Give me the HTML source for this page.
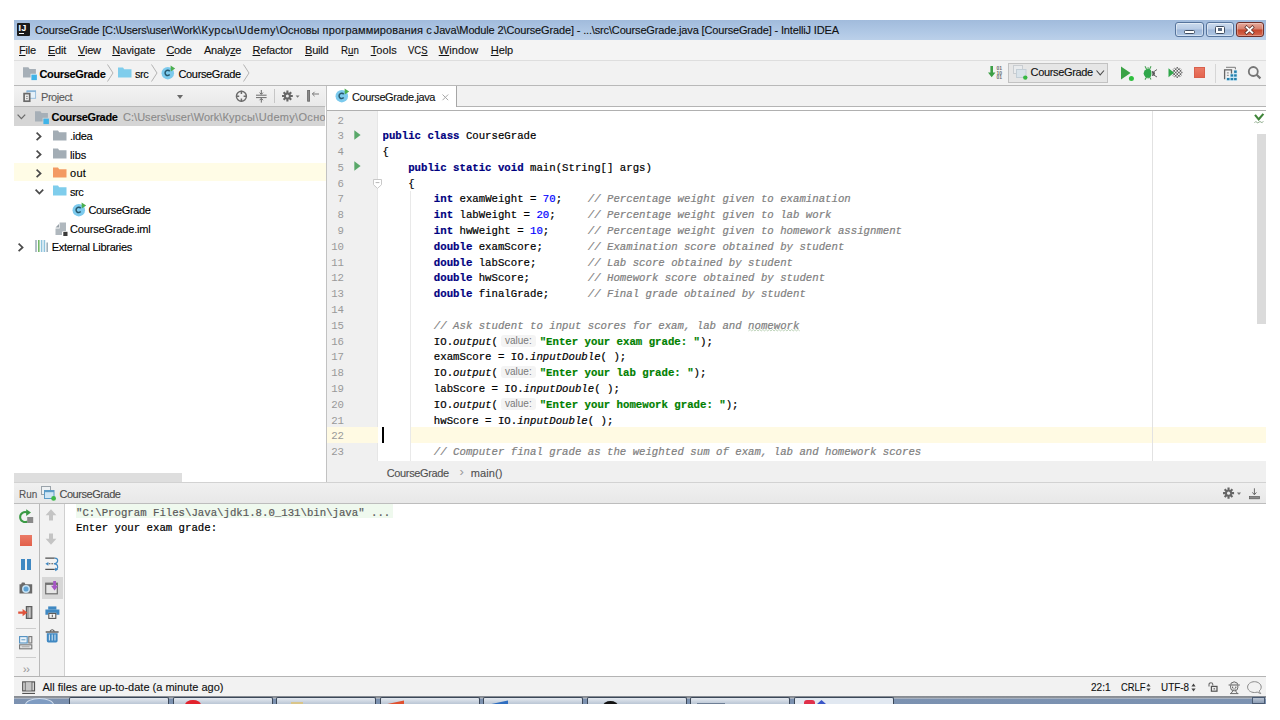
<!DOCTYPE html>
<html lang="en">
<head>
<meta charset="utf-8">
<title>CourseGrade - IntelliJ IDEA</title>
<style>
*{box-sizing:border-box;margin:0;padding:0}
html,body{width:1280px;height:720px;overflow:hidden;background:#fff}
body{position:relative;font-family:"Liberation Sans",sans-serif;font-size:11px;color:#000;-webkit-text-stroke:0.12px}
.a{position:absolute}
.t{position:absolute;white-space:nowrap;line-height:14px}
svg{position:absolute;overflow:visible}
#win{position:absolute;left:0;top:0;width:1280px;height:720px;overflow:hidden}
#bg{left:14px;top:20px;width:1252px;height:684px;background:#f2f2f2}
#title{left:14px;top:20px;width:1252px;height:20px;background:linear-gradient(#a1bbdc,#b0c8e5 60%,#bbd0e9)}
#menu{left:14px;top:40px;width:1252px;height:20px;background:#f4f4f4}
#menu span{position:absolute;top:0;line-height:20px;white-space:nowrap;font-size:11px;color:#111}
#menu u{text-decoration:underline;text-underline-offset:1px}
#nav{left:14px;top:60px;width:1252px;height:26px;background:#f2f2f2;border-top:1px solid #dedede;border-bottom:1px solid #b9b9b9}
.mono{font-family:"Liberation Mono",monospace;font-size:10.69px}
#code{-webkit-text-stroke:0.2px;left:382.5px;top:113.5px;height:347.5px;overflow:hidden;line-height:15.8px;white-space:pre;color:#000;font-family:"Liberation Mono",monospace;font-size:10.69px}
#code b{color:#000080;font-weight:bold}
#code i{color:#808080;font-style:italic}
#code .n{color:#0000ff}
#code .s{color:#008000;font-weight:bold}
#code em{font-style:italic;color:#000}
#code .h{-webkit-text-stroke:0;display:inline-block;font-family:"Liberation Sans",sans-serif;font-size:10px;color:#7a7a7a;background:#f4f4f4;border-radius:3px;height:12px;line-height:12px;width:35px;text-align:center;margin:0 3.8px 0 2.9px;vertical-align:top;margin-top:0.2px}
#lnum{left:327px;top:113.5px;height:347.5px;overflow:hidden;width:17px;line-height:15.8px;text-align:right;white-space:pre;color:#999;-webkit-text-stroke:0;font-family:"Liberation Mono",monospace;font-size:10.69px}
#con{-webkit-text-stroke:0.2px;left:76px;top:505.5px;line-height:15.7px;white-space:pre;font-family:"Liberation Mono",monospace;font-size:10.69px;color:#000}
.tb{top:696.6px;width:100px;height:8px;background:linear-gradient(#e4e9f0,#b3c0d0);border:1px solid #3c4859;border-bottom:0;border-radius:2px 2px 0 0}
</style>
</head>
<body>
<div id="win">
<div id="bg" class="a"></div>
<!-- title bar -->
<div id="title" class="a">
  <div class="a" style="left:3px;top:2.5px;width:12.7px;height:13.4px;background:#1b1b1b;border-radius:1px"></div>
  <div class="t" style="left:4.6px;top:3.6px;font-size:8.6px;line-height:9px;font-weight:bold;color:#fff;letter-spacing:0.4px">IJ</div>
  <div class="a" style="left:4.8px;top:13px;width:5px;height:1.4px;background:#fff"></div>
  <div class="t" style="left:21px;top:0;line-height:20px;font-size:11px;color:#111;letter-spacing:-0.158px;white-space:pre">CourseGrade [C:\Users\user\Work<span style="letter-spacing:0.476px">\Курсы\Udemy\</span><span style="letter-spacing:0">Основы </span><span style="letter-spacing:0.16px">программирования </span><span style="letter-spacing:-0.56px">с </span><span style="letter-spacing:-0.14px">Java\Module 2\CourseGrade]</span><span style="letter-spacing:-0.155px"> - ...\src\CourseGrade.java [CourseGrade] - IntelliJ IDEA</span></div>
  <!-- window buttons -->
  <div class="a" style="left:1161px;top:2px;width:28.6px;height:15px;border:1px solid #56749c;border-radius:3px;background:linear-gradient(#cbdbee,#b7cbe5 48%,#9db6d8 52%,#afc7e4);box-shadow:inset 0 0 0 1px rgba(255,255,255,.45)"></div>
  <div class="a" style="left:1170px;top:9.5px;width:10.5px;height:4.4px;border:1px solid #3e4c60;border-radius:1.5px;background:#fff"></div>
  <div class="a" style="left:1191.5px;top:2px;width:28.2px;height:15px;border:1px solid #56749c;border-radius:3px;background:linear-gradient(#cbdbee,#b7cbe5 48%,#9db6d8 52%,#afc7e4);box-shadow:inset 0 0 0 1px rgba(255,255,255,.45)"></div>
  <div class="a" style="left:1200.8px;top:6px;width:10px;height:7.6px;border:1px solid #3e4c60;border-radius:1.5px;background:#fff"></div>
  <div class="a" style="left:1203.6px;top:8.4px;width:4.6px;height:3px;background:#5a6a80"></div>
  <div class="a" style="left:1222px;top:2px;width:28.2px;height:15px;border:1px solid #6e2f2a;border-radius:3px;background:linear-gradient(#e6aa9c,#d67f6c 48%,#c4452c 52%,#d76a50);box-shadow:inset 0 0 0 1px rgba(255,255,255,.3)"></div>
  <svg style="left:1231.3px;top:5.8px" width="9" height="8" viewBox="0 0 9 8"><path d="M1.6 1.3 L7.4 6.7 M7.4 1.3 L1.6 6.7" stroke="#4e2622" stroke-width="3.2" stroke-linecap="square"/><path d="M1.6 1.3 L7.4 6.7 M7.4 1.3 L1.6 6.7" stroke="#fff" stroke-width="1.9" stroke-linecap="square"/></svg>
</div>
<!-- menu -->
<div id="menu" class="a">
  <span style="left:5px;letter-spacing:-0.2px"><u>F</u>ile</span>
  <span style="left:34px;letter-spacing:-0.25px"><u>E</u>dit</span>
  <span style="left:64px;letter-spacing:-0.2px"><u>V</u>iew</span>
  <span style="left:98.2px;letter-spacing:-0.05px"><u>N</u>avigate</span>
  <span style="left:152.4px;letter-spacing:-0.3px"><u>C</u>ode</span>
  <span style="left:190px;letter-spacing:-0.28px">Analy<u>z</u>e</span>
  <span style="left:238.5px;letter-spacing:-0.2px"><u>R</u>efactor</span>
  <span style="left:291px;letter-spacing:-0.2px"><u>B</u>uild</span>
  <span style="left:327.3px;transform:scaleX(.88);transform-origin:0 0">R<u>u</u>n</span>
  <span style="left:356.7px;letter-spacing:0.08px"><u>T</u>ools</span>
  <span style="left:394px;transform:scaleX(.867);transform-origin:0 0">VC<u>S</u></span>
  <span style="left:424.7px;letter-spacing:0.08px"><u>W</u>indow</span>
  <span style="left:476.8px;letter-spacing:-0.1px"><u>H</u>elp</span>
</div>
<!-- nav bar -->
<div id="nav" class="a"></div>
<svg style="left:23px;top:66px" width="15" height="14" viewBox="0 0 15 14"><path d="M0 1.3h5.4l1.2 1.7H12.9V11.4H0z" fill="#a6afb7"/><rect x="7.6" y="7.8" width="7" height="7" fill="#f2f2f2"/><rect x="8.4" y="8.6" width="5.5" height="5.5" fill="#40b4e8"/></svg>
<div class="t" style="left:39.5px;top:66.7px;font-weight:bold;color:#000;letter-spacing:-0.34px">CourseGrade</div>
<svg style="left:107px;top:64px" width="7" height="18" viewBox="0 0 7 18"><path d="M0.5 0.5 L6 9 L0.5 17.5" fill="none" stroke="#b3b3b3" stroke-width="1"/></svg>
<svg style="left:118px;top:67px" width="14" height="11" viewBox="0 0 14 11"><path d="M0 0.5h5l1.2 1.8H13.5V10.5H0z" fill="#7fcdec"/></svg>
<div class="t" style="left:135px;top:66.7px;letter-spacing:-0.4px">src</div>
<svg style="left:151px;top:64px" width="7" height="18" viewBox="0 0 7 18"><path d="M0.5 0.5 L6 9 L0.5 17.5" fill="none" stroke="#b3b3b3" stroke-width="1"/></svg>
<svg style="left:161px;top:66px" width="14" height="14" viewBox="0 0 14 14"><circle cx="6.8" cy="7.2" r="6.25" fill="#7ccaed"/><path d="M9.6 -0.4 L14.2 2.4 L9.8 5.6z" fill="#4caf50"/><path d="M8.7 5.3a2.6 2.6 0 1 0 0 3.3" fill="none" stroke="#26586e" stroke-width="1.5"/></svg>
<div class="t" style="left:178.5px;top:66.7px;letter-spacing:-0.35px">CourseGrade</div>
<svg style="left:243px;top:64px" width="7" height="18" viewBox="0 0 7 18"><path d="M0.5 0.5 L6 9 L0.5 17.5" fill="none" stroke="#b3b3b3" stroke-width="1"/></svg>
<!-- toolbar right -->
<svg style="left:988px;top:66px" width="16" height="14" viewBox="0 0 16 14"><path d="M2.4 0h2.6v6.5h2.4L3.7 11.2 0 6.5h2.4z" fill="#3da046"/><g font-family="Liberation Sans, sans-serif" font-size="5" font-weight="bold" fill="#707070" style="-webkit-text-stroke:0"><text x="8.5" y="4.4">01</text><text x="8.5" y="8.9">10</text><text x="8.5" y="13.4">01</text></g></svg>
<div class="a" style="left:1008px;top:63px;width:100px;height:20px;background:#e6e6e6;border:1px solid #c2c2c2"></div>
<svg style="left:1013px;top:65px" width="16" height="16" viewBox="0 0 16 16"><rect x="0.5" y="0.5" width="9" height="8" fill="#e9ebed" stroke="#c9cdd1"/><rect x="3.5" y="4.5" width="9.5" height="8" fill="#d9e3ea" stroke="#c3ced6"/><circle cx="12.3" cy="12.6" r="2.2" fill="#35b843"/></svg>
<div class="t" style="left:1030.6px;top:65.4px;color:#111;letter-spacing:-0.35px">CourseGrade</div>
<svg style="left:1096px;top:70px" width="9" height="6" viewBox="0 0 9 6"><path d="M0.5 0.5 L4.2 4.8 L8 0.5" fill="none" stroke="#4d4d4d" stroke-width="1.1"/></svg>
<svg style="left:1120px;top:65px" width="16" height="16" viewBox="0 0 16 16"><path d="M1 1.5 L10.6 8 L1 14.5z" fill="#3ba346"/><circle cx="11.4" cy="13.6" r="2.5" fill="#2fbf3e"/></svg>
<svg style="left:1143px;top:65px" width="15" height="16" viewBox="0 0 15 16"><path d="M2 1.2 L3.8 4.8 M8 1.2 L6.4 4.8 M5.1 2.2 V4.4 M2 14.6 L3.8 11.6 M8 14.6 L6.4 11.6 M5.1 13.6 V12" stroke="#4aa356" stroke-width="1.1" fill="none"/><ellipse cx="5.2" cy="8.3" rx="4.5" ry="4.4" fill="#2fa74a"/><path d="M7.4 4 Q9.6 8.3 7.4 12.6 L10 12.6 L10 4z" fill="#f2f2f2"/><path d="M8.7 5.9 Q12 6 12 8.4 Q12 10.8 8.7 11 Q10 8.4 8.7 5.9z" fill="#5a5a5a"/><path d="M11 6.6 L14 4.5 M11 10.2 L14 12" stroke="#666" stroke-width="1" fill="none"/></svg>
<svg style="left:1168px;top:65px" width="15" height="16" viewBox="0 0 15 16"><defs><pattern id="chk" width="3.2" height="3.2" patternUnits="userSpaceOnUse" patternTransform="translate(0.5 0.3)"><rect width="1.6" height="1.6" fill="#666"/><rect x="1.6" y="1.6" width="1.6" height="1.6" fill="#666"/></pattern></defs><circle cx="9.1" cy="7.5" r="5.4" fill="#f2f2f2"/><circle cx="9.1" cy="7.5" r="5.4" fill="url(#chk)"/><path d="M0.5 3.3 L6 7.8 L0.5 12.3z" fill="#2fa74a"/></svg>
<div class="a" style="left:1194.2px;top:67.3px;width:11px;height:11px;background:linear-gradient(#ea7a66,#e4654f);border:0.5px solid #d9604c"></div>
<div class="a" style="left:1215.4px;top:64px;width:1px;height:19px;background:#d6d6d6"></div>
<svg style="left:1223px;top:66px" width="15" height="15" viewBox="0 0 15 15"><path d="M3 1.3h9.4v2" fill="none" stroke="#7c7c7c" stroke-width="1"/><path d="M1.6 13.2V3.9h6.9v3.8" fill="none" stroke="#666" stroke-width="1.3"/><path d="M3.9 6.9h1.9M3.9 9.3h1.9" stroke="#777" stroke-width="0.9"/><path d="M10.6 4h3.6v10.7H3.4V11.5h3.7V7.8h3.5z" fill="#c9e7f6"/><g fill="#237fab"><rect x="11.1" y="4.5" width="2.6" height="2.4"/><rect x="7.6" y="8.3" width="2.6" height="2.3"/><rect x="11.1" y="8.3" width="2.6" height="2.3"/><rect x="3.9" y="12" width="2.6" height="2.2"/><rect x="7.6" y="12" width="2.6" height="2.2"/><rect x="11.1" y="12" width="2.6" height="2.2"/></g></svg>
<svg style="left:1247px;top:66px" width="15" height="15" viewBox="0 0 15 15"><circle cx="6.3" cy="5.5" r="4.5" fill="none" stroke="#767676" stroke-width="1.8"/><path d="M9.6 8.8 L13.4 12.4" stroke="#767676" stroke-width="2.2"/></svg>

<!-- project tool window header -->
<div class="a" style="left:14px;top:86px;width:311px;height:21px;background:linear-gradient(#f3f3f3,#e9e9e9);border-bottom:1px solid #b9b9b9"></div>
<svg style="left:23px;top:90px" width="14" height="13" viewBox="0 0 14 13"><rect x="4" y="0.9" width="8.6" height="7.4" fill="#e6f1f9" stroke="#93bbdb" stroke-width="0.9"/><path d="M3.6 1.3h9.4" stroke="#8ab5d8" stroke-width="1.5"/><rect x="1.1" y="3.6" width="5.6" height="7.6" fill="#ececec" stroke="#6a6a6a" stroke-width="1.7"/><path d="M3 6.4h1.8M3 8.6h1.8" stroke="#7a7a7a" stroke-width="0.8"/></svg>
<div class="t" style="left:41px;top:90px;color:#5a5a5a;letter-spacing:-0.44px">Project</div>
<svg style="left:177px;top:95px" width="6" height="4" viewBox="0 0 6 4"><path d="M0 0h6L3 4z" fill="#6a6a6a"/></svg>
<svg style="left:235px;top:90px" width="13" height="13" viewBox="0 0 13 13"><circle cx="6.4" cy="6.2" r="5" fill="none" stroke="#6b6b6b" stroke-width="1.4"/><path d="M6.4 0.8v3.2M6.4 8.6v3.2M1 6.2h3.2M8.6 6.2h3.2" stroke="#6b6b6b" stroke-width="1.5"/></svg>
<svg style="left:256px;top:90px" width="11" height="13" viewBox="0 0 11 13"><path d="M0 5.2h10.6M0 7.6h10.6" stroke="#6b6b6b" stroke-width="1"/><path d="M5.3 0v4M3.6 2.6L5.3 4.4 7 2.6M5.3 12.6v-4M3.6 10.2L5.3 8.4 7 10.2" stroke="#6b6b6b" stroke-width="1" fill="none"/></svg>
<div class="a" style="left:274px;top:89px;width:1px;height:14px;background:#c6c6c6"></div>
<svg style="left:282.4px;top:90px" width="20" height="13" viewBox="0 0 20 13"><g stroke="#666" stroke-width="2.1"><path d="M5.4 0.4v11.2M0 6h10.8M1.6 2.2l7.6 7.6M9.2 2.2L1.6 9.8"/></g><circle cx="5.4" cy="6" r="3.4" fill="#666"/><circle cx="5.4" cy="6" r="1.5" fill="#ececec"/><path d="M13.6 5.4h4L15.6 7.8z" fill="#777"/></svg>
<svg style="left:307px;top:90px" width="13" height="12" viewBox="0 0 13 12"><rect x="0.6" y="0.4" width="2" height="10.8" fill="#8a8a8a" stroke="#666" stroke-width="0.8"/><path d="M5.4 4h6.6M7.6 1.8L5.4 4l2.2 2.2" fill="none" stroke="#777" stroke-width="1"/></svg>

<!-- project tree -->
<div class="a" style="left:14px;top:107px;width:312px;height:375px;background:#fff"></div>
<div class="a" style="left:14px;top:107px;width:311px;height:19px;background:#d5d5d5"></div>
<div class="a" style="left:14px;top:163.2px;width:311.7px;height:18.2px;background:#fffce6"></div>
<div class="a" style="left:14px;top:472.5px;width:167.7px;height:9.4px;background:#dedede"></div>
<!-- tree rows -->
<svg style="left:17px;top:114px" width="9" height="6" viewBox="0 0 9 6"><path d="M0.6 0.6 L4.4 4.6 L8.2 0.6" fill="none" stroke="#6a6a6a" stroke-width="1.3"/></svg>
<svg style="left:35px;top:110px" width="15" height="14" viewBox="0 0 15 14"><path d="M0 1.3h5.4l1.2 1.7H12.9V11.4H0z" fill="#a6afb7"/><rect x="7.6" y="7.8" width="7" height="7" fill="#d5d5d5"/><rect x="8.4" y="8.6" width="5.5" height="5.5" fill="#40b4e8"/></svg>
<div class="t" style="left:51.6px;top:110.3px;font-weight:bold;color:#000;letter-spacing:-0.34px">CourseGrade</div>
<div class="t" style="left:123px;top:110.3px;color:#8a8a8a;width:202px;overflow:hidden;letter-spacing:0.03px">C:\Users\user\Work\<span style="letter-spacing:0.32px">Курсы\Udemy\Основы программирования с Java\Module 2\CourseGrade</span></div>

<svg style="left:36px;top:131.5px" width="6" height="9" viewBox="0 0 6 9"><path d="M0.6 0.6 L4.6 4.4 L0.6 8.2" fill="none" stroke="#4a4a4a" stroke-width="1.7"/></svg>
<svg style="left:53px;top:129.6px" width="14" height="11" viewBox="0 0 14 11"><path d="M0 0.5h5l1.2 1.8H13.5V10.5H0z" fill="#a3adb5"/></svg>
<div class="t" style="left:70px;top:129px;letter-spacing:-0.28px">.idea</div>

<svg style="left:36px;top:150px" width="6" height="9" viewBox="0 0 6 9"><path d="M0.6 0.6 L4.6 4.4 L0.6 8.2" fill="none" stroke="#4a4a4a" stroke-width="1.7"/></svg>
<svg style="left:53px;top:148.2px" width="14" height="11" viewBox="0 0 14 11"><path d="M0 0.5h5l1.2 1.8H13.5V10.5H0z" fill="#a3adb5"/></svg>
<div class="t" style="left:70px;top:147.6px;letter-spacing:-0.12px">libs</div>

<svg style="left:36px;top:168.6px" width="6" height="9" viewBox="0 0 6 9"><path d="M0.6 0.6 L4.6 4.4 L0.6 8.2" fill="none" stroke="#4a4a4a" stroke-width="1.7"/></svg>
<svg style="left:53px;top:166.8px" width="14" height="11" viewBox="0 0 14 11"><path d="M0 0.5h5l1.2 1.8H13.5V10.5H0z" fill="#f39a63"/></svg>
<div class="t" style="left:70px;top:166.2px;letter-spacing:0.3px">out</div>

<svg style="left:35px;top:189px" width="9" height="6" viewBox="0 0 9 6"><path d="M0.6 0.6 L4.4 4.6 L8.2 0.6" fill="none" stroke="#4a4a4a" stroke-width="1.7"/></svg>
<svg style="left:53px;top:185.4px" width="14" height="11" viewBox="0 0 14 11"><path d="M0 0.5h5l1.2 1.8H13.5V10.5H0z" fill="#7fcdec"/></svg>
<div class="t" style="left:70px;top:184.8px;letter-spacing:-0.4px">src</div>

<svg style="left:71.5px;top:203px" width="14" height="14" viewBox="0 0 14 14"><circle cx="6.8" cy="7.2" r="6.25" fill="#7ccaed"/><path d="M9.6 -0.4 L14.2 2.4 L9.8 5.6z" fill="#4caf50"/><path d="M8.7 5.3a2.6 2.6 0 1 0 0 3.3" fill="none" stroke="#26586e" stroke-width="1.5"/></svg>
<div class="t" style="left:88.4px;top:203.4px;letter-spacing:-0.35px">CourseGrade</div>

<svg style="left:55px;top:222px" width="13" height="14" viewBox="0 0 13 14"><path d="M0.5 5.5L4 2v3.5z" fill="#98a1a8"/><path d="M4.6 0.5H11V10H7V13H0.5V6.4h4.1z" fill="#b0b8be"/><rect x="7.6" y="9" width="5" height="5" fill="#fff"/><rect x="8.3" y="9.8" width="4.2" height="4.2" fill="#3a3a3a"/></svg>
<div class="t" style="left:70px;top:221.5px;letter-spacing:-0.17px">CourseGrade.iml</div>

<svg style="left:17.5px;top:243px" width="6" height="9" viewBox="0 0 6 9"><path d="M0.6 0.6 L4.6 4.4 L0.6 8.2" fill="none" stroke="#4a4a4a" stroke-width="1.7"/></svg>
<svg style="left:35px;top:239.8px" width="14" height="12" viewBox="0 0 14 12"><path d="M1 0v12" stroke="#9fb0bb" stroke-width="1.6"/><path d="M3.8 0v12" stroke="#74b867" stroke-width="1.6"/><path d="M6.6 0v12" stroke="#8fc3dd" stroke-width="1.6"/><path d="M9.4 0v12" stroke="#8fc3dd" stroke-width="1.6"/><path d="M12.2 2.6v9.4" stroke="#9fb0bb" stroke-width="1.6"/></svg>
<div class="t" style="left:51.8px;top:240.1px;letter-spacing:-0.3px">External Libraries</div>

<!-- splitter between project and editor -->
<div class="a" style="left:325.7px;top:86px;width:1.3px;height:396px;background:#c2c2c2"></div>
<!-- editor tab strip -->
<div class="a" style="left:327px;top:86px;width:939px;height:25px;background:#f2f2f2"></div>
<div class="a" style="left:327px;top:106px;width:939px;height:1.4px;background:#b4b4b4"></div>
<div class="a" style="left:327px;top:107.4px;width:939px;height:2.8px;background:#fff"></div>
<div class="a" style="left:327px;top:86px;width:130px;height:24px;background:#fff"></div><div class="a" style="left:456px;top:86px;width:1px;height:21px;background:#a6a6a6"></div>
<div class="a" style="left:327px;top:110px;width:939px;height:1px;background:#b0b0b0"></div>
<svg style="left:335px;top:88.7px" width="14" height="14" viewBox="0 0 14 14"><circle cx="6.8" cy="7.2" r="6.25" fill="#7ccaed"/><path d="M9.6 -0.4 L14.2 2.4 L9.8 5.6z" fill="#4caf50"/><path d="M8.7 5.3a2.6 2.6 0 1 0 0 3.3" fill="none" stroke="#26586e" stroke-width="1.5"/></svg>
<div class="t" style="left:352px;top:90px;color:#111;letter-spacing:-0.39px">CourseGrade.java</div>
<svg style="left:442px;top:93.5px" width="7" height="7" viewBox="0 0 7 7"><path d="M0.5 0.5 L6.2 6.2 M6.2 0.5 L0.5 6.2" stroke="#a8a8a8" stroke-width="1"/></svg>

<!-- editor body -->
<div class="a" style="left:327px;top:111px;width:939px;height:350px;background:#fff"></div>
<div class="a" style="left:327px;top:111px;width:50.5px;height:350px;background:#f0f0f0;border-right:1px solid #e6e6e6"></div>
<div class="a" style="left:327px;top:427.3px;width:939px;height:15.6px;background:#fffae3"></div><div class="a" style="left:377.5px;top:427.3px;width:32.5px;height:15.6px;background:#fff"></div>
<div class="a" style="left:1152px;top:111px;width:1px;height:350px;background:#e2e2e2"></div>
<div class="a" style="left:410px;top:191px;width:1px;height:270px;background:#e9e9e9"></div>
<div class="a" style="left:1256.9px;top:134.2px;width:9.1px;height:189.5px;background:#dbdbdb"></div>
<svg style="left:1254px;top:113px" width="11" height="12" viewBox="0 0 11 12"><path d="M1 1.8 L4.7 6.3 L9.4 0.9" fill="none" stroke="#3f8539" stroke-width="2.1"/><path d="M0.5 9.8 q1.1 -2 2.2 -0.6 t2.2 0 t2.2 0 t2.2 -1" fill="none" stroke="#86a582" stroke-width="0.9"/></svg>
<!-- gutter icons -->
<svg style="left:354px;top:129.8px" width="7" height="10" viewBox="0 0 7 10"><path d="M0.3 0.3 L6.6 5 L0.3 9.7z" fill="#59a869"/></svg>
<svg style="left:354px;top:161.4px" width="7" height="10" viewBox="0 0 7 10"><path d="M0.3 0.3 L6.6 5 L0.3 9.7z" fill="#59a869"/></svg>
<svg style="left:373px;top:178.5px" width="9" height="10" viewBox="0 0 9 10"><path d="M0.5 0.5h8v5.2L4.5 9.4 0.5 5.7z" fill="#fff" stroke="#c9c9c9" stroke-width="1"/><path d="M2.6 3.6h3.8" stroke="#b5b5b5" stroke-width="1"/></svg>
<div id="lnum" class="a">2
3
4
5
6
7
8
9
10
11
12
13
14
15
16
17
18
19
20
21
22
23</div>
<div id="code" class="a">
<b>public class</b> CourseGrade
{
    <b>public static void</b> main(String[] args)
    {
        <b>int</b> examWeight = <span class="n">70</span>;    <i>// Percentage weight given to examination</i>
        <b>int</b> labWeight = <span class="n">20</span>;     <i>// Percentage weight given to lab work</i>
        <b>int</b> hwWeight = <span class="n">10</span>;      <i>// Percentage weight given to homework assignment</i>
        <b>double</b> examScore;       <i>// Examination score obtained by student</i>
        <b>double</b> labScore;        <i>// Lab score obtained by student</i>
        <b>double</b> hwScore;         <i>// Homework score obtained by student</i>
        <b>double</b> finalGrade;      <i>// Final grade obtained by student</i>

        <i>// Ask student to input scores for exam, lab and nomework</i>
        IO.<em>output</em>(<span class="h">value:</span><span class="s">"Enter your exam grade: "</span>);
        examScore = IO.<em>inputDouble</em>( );
        IO.<em>output</em>(<span class="h">value:</span><span class="s">"Enter your lab grade: "</span>);
        labScore = IO.<em>inputDouble</em>( );
        IO.<em>output</em>(<span class="h">value:</span><span class="s">"Enter your homework grade: "</span>);
        hwScore = IO.<em>inputDouble</em>( );

        <i>// Computer final grade as the weighted sum of exam, lab and homework scores</i></div>
<div class="a" style="left:382.3px;top:427.3px;width:2.1px;height:15.6px;background:#000"></div>
<svg style="left:748px;top:328px" width="52" height="5" viewBox="0 0 52 5"><path d="M0.5 2.9000000000000004 L2.1 1.5 L3.7 2.9 L5.3 1.5 L6.9 2.9 L8.5 1.5 L10.1 2.9 L11.7 1.5 L13.3 2.9 L14.9 1.5 L16.5 2.9 L18.1 1.5 L19.7 2.9 L21.3 1.5 L22.9 2.9 L24.5 1.5 L26.1 2.9 L27.7 1.5 L29.3 2.9 L30.9 1.5 L32.5 2.9 L34.1 1.5 L35.7 2.9 L37.3 1.5 L38.9 2.9 L40.5 1.5 L42.1 2.9 L43.7 1.5 L45.3 2.9 L46.9 1.5 L48.5 2.9 L50.1 1.5 L51.7 2.9" fill="none" stroke="#a9c7a4" stroke-width="0.8"/></svg>
<!-- editor breadcrumbs -->
<div class="a" style="left:327px;top:461px;width:939px;height:21px;background:#f0f0f0"></div>
<div class="t" style="left:386.7px;top:465.6px;color:#505050;letter-spacing:-0.35px">CourseGrade</div>
<div class="t" style="left:459.4px;top:464.6px;color:#9a9a9a;font-size:13px;-webkit-text-stroke:0">›</div>
<div class="t" style="left:470.7px;top:465.6px;color:#505050;letter-spacing:0.1px">main()</div>
<!-- run tool window -->
<div class="a" style="left:14px;top:482px;width:1252px;height:22px;background:linear-gradient(#f0f0f0,#e8e8e8);border-top:1px solid #d2d2d2;border-bottom:1px solid #bdbdbd"></div>
<div class="t" style="left:18.75px;top:487px;color:#555;transform:scaleX(.9);transform-origin:0 0">Run</div>
<svg style="left:41px;top:486px" width="16" height="15" viewBox="0 0 16 15"><rect x="0.5" y="0.5" width="9" height="8" fill="#eef1f3" stroke="#9aa3aa"/><rect x="3.5" y="4.5" width="9.5" height="8" fill="#cfe6f5" stroke="#5d9cc7"/><path d="M3.5 5.5h9.5" stroke="#5d9cc7" stroke-width="1.4"/><circle cx="12.6" cy="12.4" r="2.4" fill="#3fb84a"/></svg>
<div class="t" style="left:59.4px;top:487px;color:#4a4a4a;letter-spacing:-0.45px">CourseGrade</div>
<svg style="left:1222.8px;top:487.2px" width="20.5" height="13.3" viewBox="0 0 20 13"><g stroke="#666" stroke-width="2.1"><path d="M5.4 0.4v11.2M0 6h10.8M1.6 2.2l7.6 7.6M9.2 2.2L1.6 9.8"/></g><circle cx="5.4" cy="6" r="3.4" fill="#666"/><circle cx="5.4" cy="6" r="1.5" fill="#ececec"/><path d="M13.6 5.4h4L15.6 7.8z" fill="#777"/></svg>
<svg style="left:1249px;top:487.6px" width="12" height="12" viewBox="0 0 12 12"><path d="M5.4 0.3v6.4M3.4 4.4l2 2.4 2-2.4" fill="none" stroke="#6a6a6a" stroke-width="1"/><rect x="0.6" y="8.6" width="9.8" height="2.2" fill="#8a8a8a" stroke="#5a5a5a" stroke-width="0.7"/></svg>

<div class="a" style="left:14px;top:504px;width:1252px;height:172px;background:#fff"></div>
<div class="a" style="left:14px;top:504px;width:25.8px;height:172px;background:#f2f2f2;border-right:1px solid #b9b9b9"></div>
<div class="a" style="left:39.5px;top:504px;width:25.5px;height:172px;background:#f2f2f2;border-right:1px solid #d0d0d0"></div>
<div class="a" style="left:41.5px;top:577px;width:21px;height:21.5px;background:#d7d7d7"></div>
<div class="a" style="left:16px;top:627.9px;width:20px;height:1px;background:#cdcdcd"></div>
<div class="a" style="left:16px;top:657.2px;width:20px;height:1px;background:#cdcdcd"></div>
<!-- col1 icons -->
<svg style="left:19px;top:509px" width="15" height="15" viewBox="0 0 15 15"><path d="M8.6 12.4 A5 5 0 1 1 8.4 3.6" fill="none" stroke="#3a9a44" stroke-width="2"/><path d="M7.2 0.2 L12 3.6 L7.2 7z" fill="#3a9a44"/><rect x="8.2" y="8" width="6" height="6" fill="#8a8a8a"/></svg>
<div class="a" style="left:20px;top:535px;width:11.5px;height:11px;background:linear-gradient(#ea7a66,#e2604a)"></div>
<div class="a" style="left:21px;top:559px;width:3.8px;height:11px;background:#3f88c2"></div>
<div class="a" style="left:26.8px;top:559px;width:3.8px;height:11px;background:#3f88c2"></div>
<svg style="left:19px;top:582px" width="14" height="12" viewBox="0 0 14 12"><path d="M0.5 2.2h1.6l0.8-1.6h2.6l0.8 1.6h6.9v9.4H0.5z" fill="#6a6a6a"/><circle cx="7" cy="6.9" r="4" fill="#c6e2f4"/><circle cx="7" cy="6.9" r="2.5" fill="#5fa3d6"/></svg>
<svg style="left:18px;top:606px" width="15" height="13" viewBox="0 0 15 13"><rect x="8.4" y="0.6" width="5.4" height="11.8" fill="#a2a2a2" stroke="#5e5e5e" stroke-width="1.2"/><path d="M11.6 1.4v10.2" stroke="#c8c8c8" stroke-width="1.4"/><path d="M0.2 5.4h4.4V2.9L9.4 6.6 4.6 10.3V7.8H0.2z" fill="#e0533b"/></svg>
<svg style="left:19px;top:636px" width="14" height="14" viewBox="0 0 14 14"><rect x="0.6" y="0.6" width="7.6" height="6.4" fill="#eaf3fa" stroke="#4f8fc0" stroke-width="1.1"/><path d="M2.4 3.8h4" stroke="#4f8fc0" stroke-width="0.9"/><rect x="9.8" y="0.6" width="3" height="6.4" fill="#e9e9e9" stroke="#777" stroke-width="1.1"/><rect x="0.6" y="8.8" width="12.2" height="4" fill="#e9e9e9" stroke="#777" stroke-width="1.1"/><path d="M2.6 10.8h8" stroke="#999" stroke-width="0.9"/></svg>
<div class="t" style="left:23px;top:661.5px;color:#9a9a9a;font-size:11px;letter-spacing:-0.4px">››</div>
<!-- col2 icons -->
<svg style="left:45.3px;top:508.6px" width="12" height="12" viewBox="0 0 12 12"><path d="M6 0.3 L11.4 6.2H8v5.4H4V6.2H0.6z" fill="#c4c4c4"/></svg>
<svg style="left:45.3px;top:532.6px" width="12" height="12" viewBox="0 0 12 12"><path d="M6 11.7 L11.4 5.8H8V0.4H4v5.4H0.6z" fill="#c4c4c4"/></svg>
<svg style="left:45px;top:556.5px" width="14" height="14" viewBox="0 0 14 14"><path d="M0.3 1.1h9.4M0.3 12.4h9.4" stroke="#4f4f4f" stroke-width="1.2"/><path d="M3.6 6.8h4.6" stroke="#4f4f4f" stroke-width="1.1" stroke-dasharray="1.8 1"/><path d="M9.7 1.1 Q13.2 1.3 12.6 4.2 Q12.2 6.6 9 6.8" fill="none" stroke="#3f88c2" stroke-width="1.2"/><path d="M9.7 12.4 Q13.2 12.2 12.6 9.4 Q12.2 7 9.6 6.9" fill="none" stroke="#3f88c2" stroke-width="1.2"/><path d="M3.4 4.9 L0.4 6.8 L3.4 8.7z" fill="#3f88c2"/><path d="M10.2 10.4 L13.2 12.4 L10.2 14.2z" fill="#3f88c2"/></svg>
<svg style="left:45px;top:581px" width="14" height="14" viewBox="0 0 14 14"><rect x="0.7" y="2.2" width="11.6" height="10.6" fill="#e6e6e6" stroke="#6e6e6e" stroke-width="1.2"/><path d="M0.7 3h11.6" stroke="#6e6e6e" stroke-width="1.8"/><path d="M8.2 0v4.8H6L9.6 9.4 13.2 4.8H11V0z" fill="#a557c4"/></svg>
<svg style="left:45px;top:605.5px" width="15" height="13" viewBox="0 0 15 13"><rect x="3.2" y="0.4" width="8.2" height="3.2" fill="#3f88c2"/><path d="M0.4 3.4h14v5.4H11.4V6.8H3.2v2H0.4z" fill="#3f88c2"/><rect x="3.8" y="7.4" width="7" height="5" fill="#f4f4f4" stroke="#555" stroke-width="1.1"/><path d="M7.3 8.6v2.6" stroke="#555" stroke-width="1"/></svg>
<svg style="left:45.5px;top:628.5px" width="13" height="14" viewBox="0 0 13 14"><path d="M4 2.4 Q6.2 -0.8 8.4 2.4" fill="none" stroke="#555" stroke-width="1.1"/><path d="M-0.3 3h12.9" stroke="#4a4a4a" stroke-width="1.3"/><path d="M0.8 4.2h10.8v7.6q0 1.6-1.6 1.6H2.4q-1.6 0-1.6-1.6z" fill="#3f88c2"/><path d="M3.4 5.6v6M6.2 5.6v6M9 5.6v6" stroke="#cfe3f3" stroke-width="1.1"/></svg>
<!-- console -->
<div class="a" style="left:75.5px;top:504.4px;width:317px;height:14px;background:#eff9ee"></div>
<div id="con" class="a"><span style="color:#5a5a5a">"C:\Program Files\Java\jdk1.8.0_131\bin\java" ...</span>
Enter your exam grade: </div>

<!-- status bar -->
<div class="a" style="left:14px;top:676px;width:1252px;height:20.5px;background:#f2f2f2;border-top:1px solid #b4b4b4"></div>
<svg style="left:22px;top:680.5px" width="14" height="14" viewBox="0 0 14 14"><rect x="0.7" y="0.9" width="11.8" height="9" fill="#e4e4e4" stroke="#555" stroke-width="1.2"/><rect x="3.4" y="1.4" width="6.4" height="8" fill="#c6c6c6"/><path d="M3.2 0.9v9M10 0.9v9" stroke="#555" stroke-width="0.9"/><path d="M0.2 12.4h12.8" stroke="#4a4a4a" stroke-width="1.1"/></svg>
<div class="t" style="left:42.5px;top:679.5px;color:#111">All files are up-to-date (a minute ago)</div>
<div class="t" style="left:1091px;top:679.5px;color:#111;transform:scaleX(.91);transform-origin:0 0">22:1</div>
<div class="t" style="left:1120.5px;top:679.5px;color:#111;transform:scaleX(.853);transform-origin:0 0">CRLF</div>
<svg style="left:1146px;top:682.5px" width="5" height="9" viewBox="0 0 5 9"><path d="M0.4 3.4L2.5 0.6 4.6 3.4zM0.4 5.6L2.5 8.4 4.6 5.6z" fill="#444"/></svg>
<div class="t" style="left:1161px;top:679.5px;color:#111;transform:scaleX(.897);transform-origin:0 0">UTF-8</div>
<svg style="left:1190.5px;top:682.5px" width="5" height="9" viewBox="0 0 5 9"><path d="M0.4 3.4L2.5 0.6 4.6 3.4zM0.4 5.6L2.5 8.4 4.6 5.6z" fill="#444"/></svg>
<svg style="left:1208px;top:682px" width="10" height="10" viewBox="0 0 10 10"><path d="M1 4.4V2.6a1.9 1.9 0 0 1 3.8 0v1" fill="none" stroke="#6a6a6a" stroke-width="1.1"/><rect x="3.4" y="4.4" width="5.6" height="4.8" fill="#e9e9e9" stroke="#555" stroke-width="1.2"/><path d="M6.2 6v1.6" stroke="#555" stroke-width="1"/></svg>
<svg style="left:1228px;top:680.5px" width="13" height="13" viewBox="0 0 13 13"><path d="M3 3.6V2.2Q6.2 -0.6 9.4 2.2v1.4" fill="#e6e6e6" stroke="#6a6a6a" stroke-width="1"/><path d="M0.6 4h11.2" stroke="#6a6a6a" stroke-width="1.1"/><path d="M2.6 4.4v2.4q0 3 3.6 3t3.6-3V4.4" fill="none" stroke="#6a6a6a" stroke-width="1"/><circle cx="4.6" cy="6.2" r="0.7" fill="#555"/><circle cx="7.8" cy="6.2" r="0.7" fill="#555"/><path d="M4.4 8h3.6" stroke="#6a6a6a" stroke-width="0.8"/><path d="M3 12.4 L4.8 10 M9.4 12.4 L7.6 10M2 12.6h8.4" stroke="#6a6a6a" stroke-width="1"/></svg>
<svg style="left:1247px;top:681px" width="16" height="14" viewBox="0 0 16 14"><path d="M7.4 0.7c3.8 0 6.8 2.4 6.8 5.4 0 1.6-0.8 3-2.2 4l1.8 2.6-3.6-1.6c-0.9 0.3-1.8 0.4-2.8 0.4-3.8 0-6.8-2.4-6.8-5.4s3-5.4 6.8-5.4z" fill="none" stroke="#8a8a8a" stroke-width="1"/></svg>

<!-- windows taskbar peek -->
<div class="a" style="left:14px;top:696px;width:1252px;height:8px;background:linear-gradient(#878b92 0,#8d9299 20%,#adb7c6 24%,#a4afc0 34%,#7c92b1 40%,#7b91b0)"></div>
<div class="a" style="left:25px;top:697.5px;width:29px;height:14px;border-radius:50%;background:#7f9cc2;border:1.2px solid #cfdcec"></div>
<div class="a tb" style="left:69px"></div><div class="a tb" style="left:172.5px"></div><div class="a tb" style="left:276px"></div><div class="a tb" style="left:379.5px"></div><div class="a tb" style="left:483px"></div><div class="a tb" style="left:586.5px"></div><div class="a tb" style="left:690px"></div><div class="a tb" style="left:793.5px;background:#e1e8f1"></div>
<div class="a" style="left:185px;top:699.5px;width:16px;height:10px;border-radius:50%;background:#e2222c"></div>
<div class="a" style="left:291px;top:701.5px;width:12px;height:4px;background:#d9c58a"></div>
<svg style="left:385px;top:699.5px" width="20" height="5" viewBox="0 0 20 5"><path d="M0 4.5 L19 0.5 V4.5z" fill="#e0502f"/></svg>
<svg style="left:489px;top:699.5px" width="20" height="5" viewBox="0 0 20 5"><path d="M0 4.5 L19 0.5 V4.5z" fill="#2f6ec0"/></svg>
<div class="a" style="left:603px;top:700.5px;width:15px;height:10px;border-radius:50%;background:#111"></div>
<div class="a" style="left:697px;top:702.5px;width:28px;height:2px;background:#6e7f96"></div>
<div class="a" style="left:804px;top:700px;width:11px;height:5px;border-radius:3px 3px 0 0;background:#e0304a"></div>
<svg style="left:817px;top:700px" width="9" height="4" viewBox="0 0 9 4"><path d="M0 4 L4.5 0 L9 4z" fill="#3a56c8"/></svg>
<div class="a" style="left:1252px;top:697px;width:12.5px;height:7px;background:linear-gradient(#b9c4d3,#8c9db5);border:1px solid #4a5a72"></div>
<div class="a" style="left:14px;top:704px;width:1252px;height:16px;background:#fff"></div>
</div>
</body>
</html>
